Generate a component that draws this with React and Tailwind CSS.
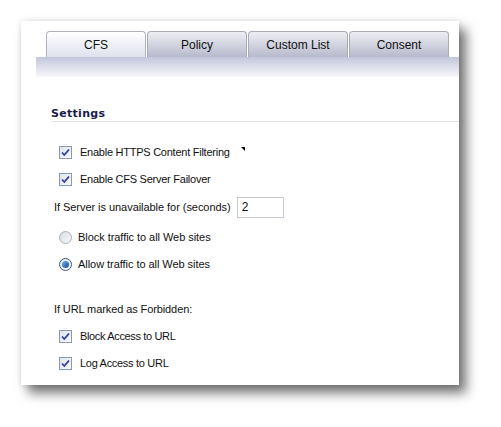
import React from "react";

const Check = () => (
  <span className="w-[13px] h-[13px] border border-[#8a9ab0] bg-gradient-to-br from-[#dfe3ea] to-[#f8f9fb] flex items-center justify-center shrink-0">
    <svg width="9" height="9" viewBox="0 0 9 9">
      <path d="M1 4.5 L3.3 7 L8 1.5" stroke="#2d3fa6" strokeWidth="1.8" fill="none" />
    </svg>
  </span>
);

const Radio = ({ on }) => (
  <span
    className={
      "w-[13px] h-[13px] rounded-full border shrink-0 flex items-center justify-center " +
      (on ? "border-[#3b5a86] bg-gradient-to-br from-[#dde4ee] to-[#ffffff]" : "border-[#a7aeb8] bg-gradient-to-br from-[#d6dae0] to-[#fbfbfc]")
    }
  >
    {on && <span className="w-[7px] h-[7px] rounded-full bg-gradient-to-br from-[#6fb1f0] to-[#1c49a0]" />}
  </span>
);

const Tab = ({ label, active }) => (
  <div
    className={
      "h-[26px] w-[100px] rounded-t-[4px] border border-b-0 flex items-center justify-center text-[12px] text-[#111] " +
      (active
        ? "border-[#b0b3c0] bg-gradient-to-b from-white to-[#dfe1ee]"
        : "border-[#a8abb8] bg-gradient-to-b from-[#eeeef3] to-[#b7bacd]")
    }
    style={{ fontFamily: "'Liberation Sans', Arial, sans-serif" }}
  >
    {label}
  </div>
);

export default function App() {
  const f = { fontFamily: "'DejaVu Sans', Verdana, sans-serif" };
  const t = { fontFamily: "'Liberation Sans', Tahoma, Arial, sans-serif" };
  return (
    <div className="w-[501px] h-[427px] bg-white overflow-hidden pt-[21px] pl-[21px]">
      <div className="w-[438px] h-[364px] bg-white shadow-[7px_8px_11px_rgba(0,0,0,0.55),0_0_6px_rgba(0,0,0,0.12)] pt-[10px]">
        <div className="flex gap-[1px] pl-[25px]">
          <Tab label="CFS" active />
          <Tab label="Policy" />
          <Tab label="Custom List" />
          <Tab label="Consent" />
        </div>
        <div className="ml-[15px] h-[20px] bg-gradient-to-b from-[#c3c6dc] to-[#f7f7fb]" />
        <div className="pl-[30px] pt-[31px]">
          <div className="text-[11px] font-bold text-[#1b1b4d] tracking-[0.3px] leading-[12px] pb-[1px] border-b border-[#e2e2e6]" style={f}>
            Settings
          </div>
          <div className="text-[11px] text-[#111] leading-[13px]" style={t}>
            <div className="flex items-center mt-[24px] pl-[8px] tracking-[-0.25px]">
              <Check />
              <span className="ml-[8px]">Enable HTTPS Content Filtering</span>
              <svg className="ml-[11px] -mt-[8px]" width="4" height="4" viewBox="0 0 4 4"><path d="M0 0 L4 0 L4 4 Z" fill="#000" /></svg>
            </div>
            <div className="flex items-center mt-[14px] pl-[8px] tracking-[-0.25px]">
              <Check />
              <span className="ml-[8px]">Enable CFS Server Failover</span>
            </div>
            <div className="flex items-center mt-[11px] pl-[3px] tracking-[-0.05px]">
              <span>If Server is unavailable for (seconds)</span>
              <span className="ml-[6px] w-[47px] h-[21px] border border-[#c5cad6] flex items-center pl-[4px] text-[12px]">2</span>
            </div>
            <div className="flex items-center mt-[13px] pl-[8px] tracking-[-0.05px]">
              <Radio />
              <span className="ml-[6px]">Block traffic to all Web sites</span>
            </div>
            <div className="flex items-center mt-[14px] pl-[8px] tracking-[-0.05px]">
              <Radio on />
              <span className="ml-[6px]">Allow traffic to all Web sites</span>
            </div>
            <div className="mt-[32px] pl-[3px] tracking-[-0.1px]">If URL marked as Forbidden:</div>
            <div className="flex items-center mt-[14px] pl-[8px] tracking-[-0.35px]">
              <Check />
              <span className="ml-[8px]">Block Access to URL</span>
            </div>
            <div className="flex items-center mt-[14px] pl-[8px] tracking-[-0.3px]">
              <Check />
              <span className="ml-[8px]">Log Access to URL</span>
            </div>
          </div>
        </div>
      </div>
    </div>
  );
}
